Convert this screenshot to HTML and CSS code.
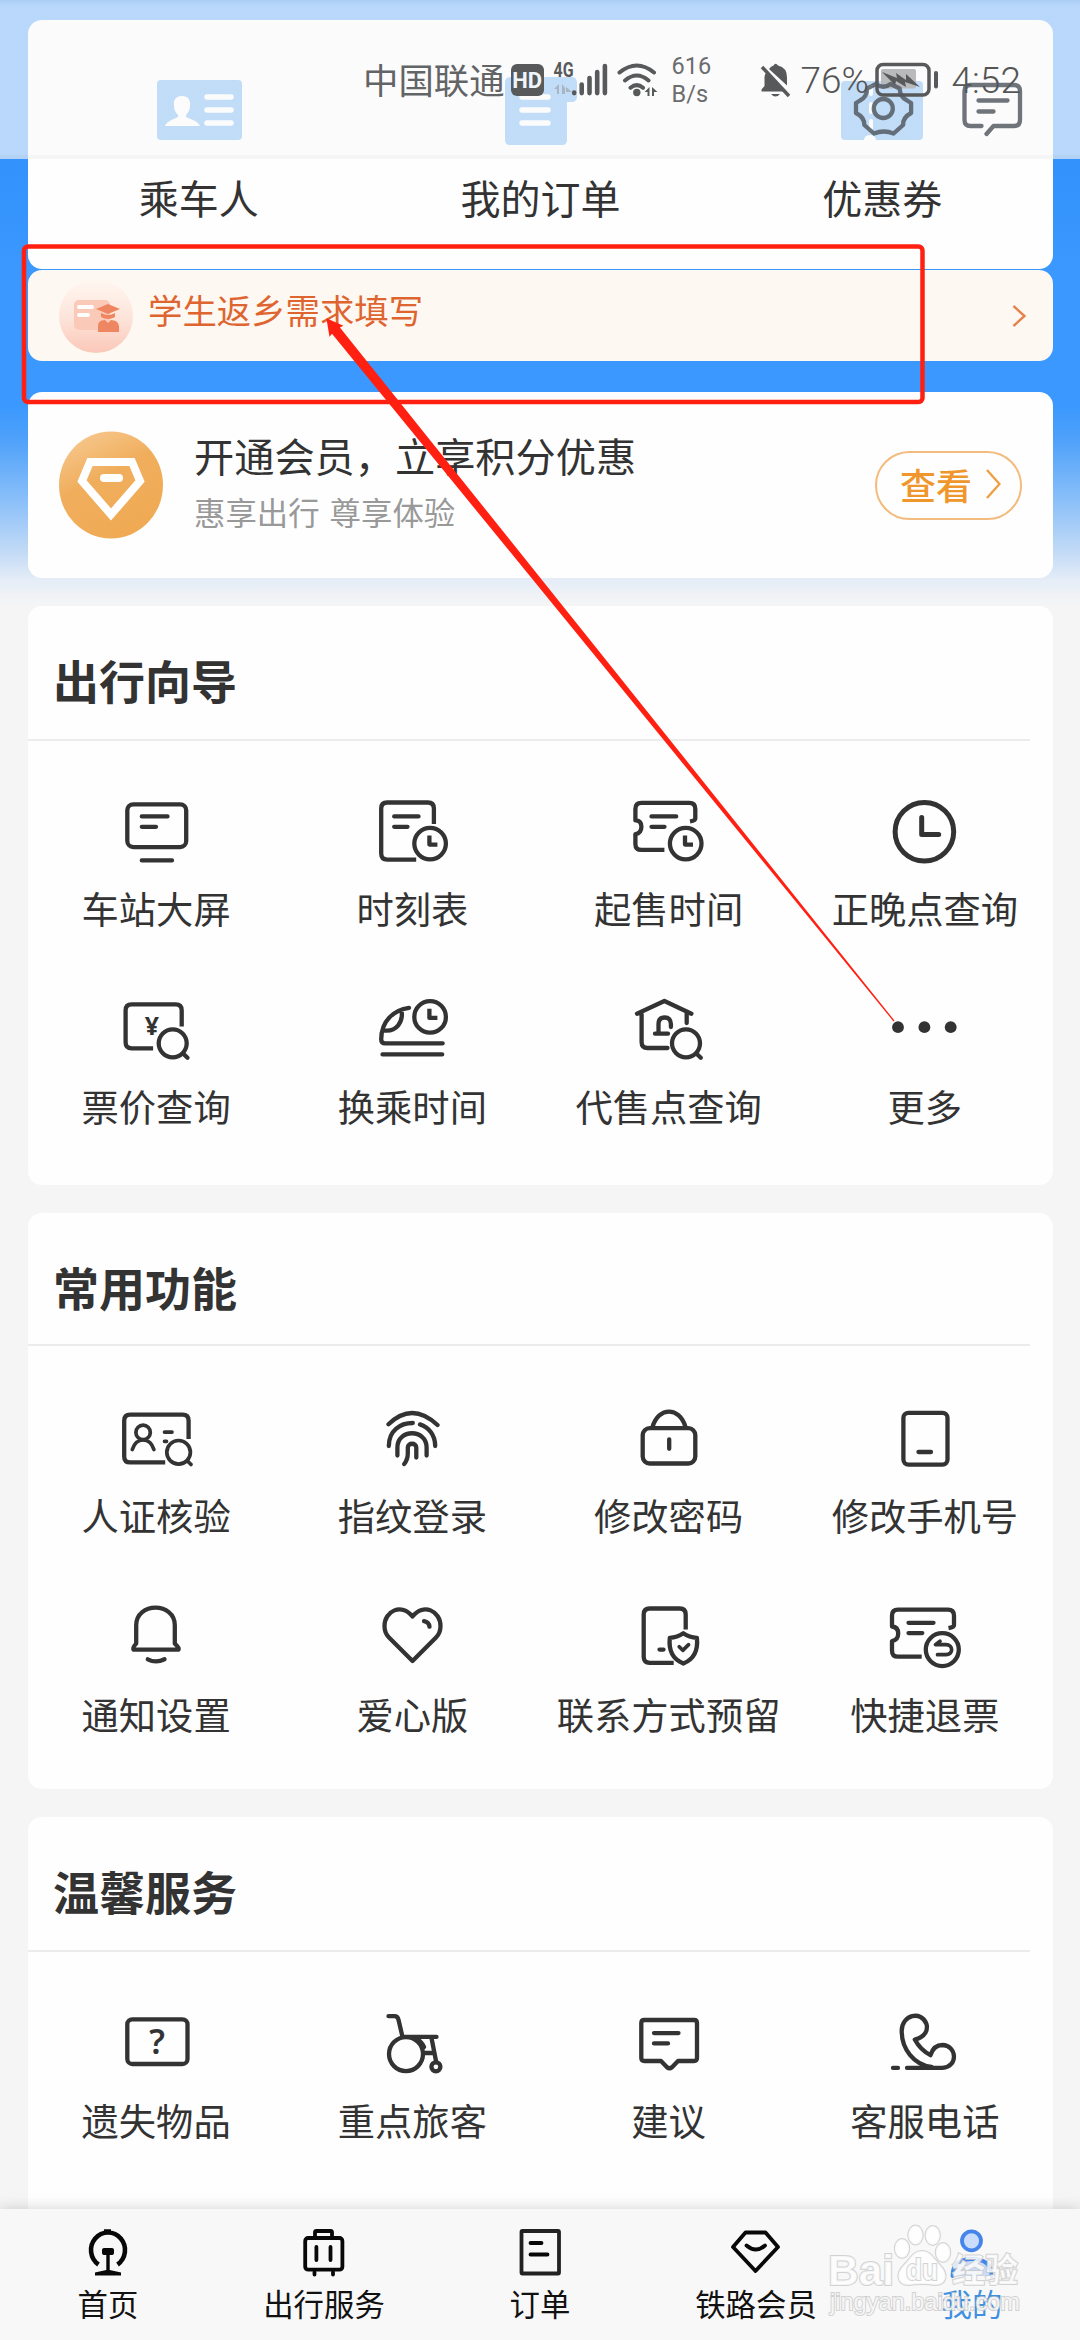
FILE: index.html
```html
<!DOCTYPE html>
<html lang="zh-CN">
<head>
<meta charset="utf-8">
<title>我的</title>
<link rel="stylesheet" href="styles.css">
</head>
<body>
<div class="screen">
  <main class="content">
    <section class="card quick">
      <div class="quick-item">
        <svg class="quick-icon" viewBox="-50 -40 100 80">
          <rect class="blue" x="-42" y="-30" width="85" height="60" rx="4"/>
          <path class="white" d="M-17-14c6 0 9 4 8 10c0 4-2 7-4 9v2c6 3 12 4 14 9h-35c2-5 7-6 13-9v-2c-2-2-4-5-4-9c-1-6 2-10 8-10z"/>
          <path class="white-line" d="M8-13h24M8 0h24M8 13h24"/>
        </svg>
        <span>乘车人</span>
      </div>
      <div class="quick-item">
        <svg class="quick-icon" viewBox="-50 -40 100 80">
          <path class="blue" d="M-28-33h60q5 0 5 6v14q0 4-4 5h-6v38q0 5-5 5h-52q-5 0-5-5v-58q0-5 7-5z"/>
          <path class="white-line" d="M-18-13h26M-18 0h26M-18 13h26"/>
        </svg>
        <span>我的订单</span>
      </div>
      <div class="quick-item">
        <svg class="quick-icon" viewBox="-50 -40 100 80">
          <rect class="blue" x="-41" y="-29" width="82" height="59" rx="4"/>
          <path class="white-line thin" d="M-11-24v8M-11-6v8M-11 11v8"/><path class="white" d="M-18 30a6 5 0 0 1 12 0z"/>
        </svg>
        <span>优惠券</span>
      </div>
    </section>

    <section class="card notice">
      <svg class="notice-icon" viewBox="0 0 76 76">
        <defs><linearGradient id="peach" x1="0" y1="0" x2="0" y2="1"><stop offset="0" stop-color="#fff7f1"/><stop offset=".5" stop-color="#fde5db"/><stop offset="1" stop-color="#fac8b8"/></linearGradient>
        <linearGradient id="gold" x1="0" y1="0" x2=".5" y2="1"><stop offset="0" stop-color="#f8cd98"/><stop offset=".5" stop-color="#f0ae5d"/><stop offset="1" stop-color="#f0aa54"/></linearGradient></defs>
        <circle cx="38" cy="38" r="37" fill="url(#peach)"/>
        <rect x="16" y="22" width="36" height="30" rx="5" fill="#fbc9b8"/>
        <path d="M21 29h13M21 37h9" stroke="#fff" stroke-width="4" stroke-linecap="round"/>
        <path d="M50 26l12 5-12 5-12-5zM43 35q7 4 14 0v4q-7 4-14 0z" fill="#ee8761"/>
        <path d="M40 54v-6q0-6 7-6l3 3 3-3q7 0 8 6v6z" fill="#ee8761"/>
      </svg>
      <span class="notice-text">学生返乡需求填写</span>
      <svg class="notice-arrow" viewBox="0 0 14 24"><path d="M1.5 2l11 10-11 10"/></svg>
    </section>

    <section class="card member">
      <svg class="member-icon" viewBox="0 0 106 108">
        <ellipse cx="53" cy="54" rx="52" ry="53.5" fill="url(#gold)"/>
        <path d="M32 31h42l8 19-29 33.500-29-33.500z" fill="none" stroke="#fff" stroke-width="8"/>
        <path d="M46 47h15" stroke="#fff" stroke-width="8" stroke-linecap="round"/>
      </svg>
      <div class="member-copy">
        <div class="member-title">开通会员，立享积分优惠</div>
        <div class="member-sub">惠享出行 尊享体验</div>
      </div>
      <div class="member-button">查看<svg viewBox="0 0 15 30"><path d="M1 1l12.500 14-12.500 14"/></svg></div>
    </section>

    <section class="card group guide">
      <h2>出行向导</h2>
      <div class="grid">
        <div class="tile"><svg viewBox="-50 -40 100 80"><rect x="-28.700" y="-27.700" width="58.900" height="42.800" rx="6"/><path d="M-14.200-15.600h25.700M-14.200-5.200h14.200M-14.200 28.400h30.200"/></svg><span>车站大屏</span></div>
        <div class="tile"><svg viewBox="-50 -40 100 80"><path class="butt" d="M21.900-8v-15.500q0-6-6-6h-40.700q-6 0-6 6v45.100q0 6 6 6h29"/><path d="M-17.800-15.600h24.300M-17.800-5.200h13.300"/><circle cx="18.100" cy="11.600" r="15.800"/><path class="butt" d="M17.400 3.500v9.100h8"/></svg><span>时刻表</span></div>
        <div class="tile"><svg viewBox="-50 -40 100 80"><path class="butt" d="M21-10.500q5.300-1 5.300-3v-9.600q0-6-6-6h-47.900q-6 0-6 6v11.500q6 0 6 6.400t-6 7.400v9.700q0 6 6 6h23"/><path d="M-17.500-15.600h24.700M-17.500-5.200h13"/><circle cx="16.700" cy="11.600" r="15.800"/><path class="butt" d="M16 3.500v9.100h8"/></svg><span>起售时间</span></div>
        <div class="tile"><svg viewBox="-50 -40 100 80"><circle class="bold" cx="-.6" cy="-.2" r="29.300"/><path class="bold" d="M-3.300-14.500v17.100h17"/></svg><span>正晚点查询</span></div>
        <div class="tile"><svg viewBox="-50 -40 100 80"><path class="butt" d="M25.700-3.500v-16.100q0-6-6-6h-44.100q-6 0-6 6v31.900q0 6 6 6h21.500"/><text class="yen" x="-4" y="4.800">¥</text><circle cx="16.700" cy="13.300" r="14"/><path d="M27 23.500l4.500 4.300"/></svg><span>票价查询</span></div>
        <div class="tile"><svg viewBox="-50 -40 100 80"><path d="M-3-22.200c-15 2-27.800 13-27.800 31.600q0 3.900 4 3.900h57.500M-29.500 24.400h59.700M-10.500-20c2 12-5 22-17.500 20.500"/><circle cx="18.100" cy="-13.100" r="15.800"/><path class="butt" d="M17.400-21.200v9.100h8"/></svg><span>换乘时间</span></div>
        <div class="tile"><svg viewBox="-50 -40 100 80"><path d="M-32-16.300l27.400-12.700 27 12.700M-27.400-17.500v29.500q0 6 6 6h19.900M17.700-18v11"/><path d="M-14 3.700h13M-10.500 3v-9q0-6.500 6.200-6.500t6.200 6.500v3"/><circle cx="17" cy="13.300" r="14"/><path d="M27.300 23.500l4.500 4.300"/></svg><span>代售点查询</span></div>
        <div class="tile"><svg viewBox="-50 -40 100 80"><g class="solid"><circle cx="-27" cy="-2.800" r="5.900"/><circle cx="-.6" cy="-2.800" r="5.900"/><circle cx="25.700" cy="-2.800" r="5.900"/></g></svg><span>更多</span></div>
      </div>
    </section>

    <section class="card group common">
      <h2>常用功能</h2>
      <div class="grid">
        <div class="tile"><svg viewBox="-50 -40 100 80"><path class="butt" d="M32.600 0v-18.400q0-6-6-6h-52.400q-6 0-6 6v35.800q0 6 6 6h35"/><g class="fine"><circle cx="-12.900" cy="-6.600" r="7.200"/><path d="M-23.700 10.500q3-9.500 10.800-9.500t10.800 9.500M8.500-6.900h7.500M8.500 2.300h2"/><circle cx="22.600" cy="13.300" r="11.800"/><path d="M31.500 22l3.500 3.500"/></g></svg><span>人证核验</span></div>
        <div class="tile"><svg viewBox="-50 -40 100 80"><path d="M-23.500-14.700q23.500-23 49 .7M-23.200 7c0-15 11-23 24-23M8-14.600c9 3 15.200 11 15.200 21.600M-14.600 16.500v-8c0-19 29.200-19 29.200 0v8M4.300 18.500v-10c0-5-8.500-5-8.500 0v6q0 6-3.600 10.500"/></svg><span>指纹登录</span></div>
        <div class="tile"><svg viewBox="-50 -40 100 80"><rect x="-26.300" y="-10.900" width="52.600" height="35.400" rx="7"/><path d="M-16.500-12c6-20.500 27-20.500 33 0M.2.300v9.500"/></svg><span>修改密码</span></div>
        <div class="tile"><svg viewBox="-50 -40 100 80"><rect x="-21.600" y="-26.200" width="44.100" height="51.800" rx="5"/><path d="M-6.500 13h12.500"/></svg><span>修改手机号</span></div>
        <div class="tile"><svg viewBox="-50 -40 100 80"><path d="M-22.500 11.600h45q1-2-3.700-6v-18.300c0-23.500-38.600-23.500-38.600 0v18.300q-3.700 4-2.700 6zM-8.200 21.300q8 4.200 16.700 0"/></svg><span>通知设置</span></div>
        <div class="tile"><svg viewBox="-50 -40 100 80"><path d="M.5-21.500c-11-14-28-5.500-28 9.500q0 7 4.500 11.500l23.500 23.500 23.500-23.500q4.500-4.500 4.500-11.500c0-15-17-23.500-28-9.500zM12-16.800q5 1 5.500 5.500"/></svg><span>爱心版</span></div>
        <div class="tile"><svg viewBox="-50 -40 100 80"><path class="butt" d="M16.700-8.500v-15q0-6-6-6h-30q-6 0-6 6v42.300q0 6 6 6h24"/><path d="M-9.500 11.600h4M14.300-4.800q6 4 13.600 4.600c1.500 14-3.500 21.700-13.600 25.700c-10-4-15-11.700-13.500-25.700q7.500-.6 13.500-4.600z"/><path class="fine" d="M10.200 8.700l3.600 3.600 5.800-5.600"/></svg><span>联系方式预留</span></div>
        <div class="tile"><svg viewBox="-50 -40 100 80"><path class="butt" d="M23.500-9.800q5.500-1 5.500-3v-9.600q0-6-6-6h-50q-6 0-6 6v10.900q6.200.5 6.200 7t-6.200 7.500v9.700q0 6 6 6h23.700"/><path d="M-16.500-15.200h25M-16.500-4.900h13.800"/><circle cx="17.300" cy="11.600" r="16.500"/><path class="fine" d="M15 3.200l-4.500 3.500h10.500c7.500 0 7.500 10 0 10h-8.500"/></svg><span>快捷退票</span></div>
      </div>
    </section>

    <section class="card group care">
      <h2>温馨服务</h2>
      <div class="grid">
        <div class="tile"><svg viewBox="-50 -40 100 80"><rect x="-28.700" y="-24.700" width="60.200" height="44.700" rx="5"/><text class="question" x="1" y="9.500">?</text></svg><span>遗失物品</span></div>
        <div class="tile"><svg viewBox="-50 -40 100 80"><path d="M-23.500-27.800h6q3.200 0 4 3.500l4 17.200h34M19.500-6l4.500 23M13.300 9h8M5-5q5 3 7 8"/><circle cx="-6" cy="10.100" r="17"/><circle cx="23.900" cy="22.800" r="4.500"/></svg><span>重点旅客</span></div>
        <div class="tile"><svg viewBox="-50 -40 100 80"><path d="M-24.700-24h49.700q3 0 3 3v35q0 3-3 3h-16l-6 6.200q-2.500 2-5 0l-6-6.200h-16.700q-3 0-3-3v-35q0-3 3-3zM-15-10.900h24.500M-15-.6h14"/></svg><span>建议</span></div>
        <div class="tile"><svg viewBox="-50 -40 100 80"><path d="M-18 23.900h35.500c16-1 14.500-22.500 0-22.900q-9 0-12 10.200q-10-5-15.700-15.600c11-3 13.200-10 11.700-15.500c-5-14-24.800-9.500-24.800 6.900c0 18 12 33.500 29.800 36M-32 23.900h5"/></svg><span>客服电话</span></div>
      </div>
    </section>
  </main>

  <nav class="tabbar">
    <div class="tab"><svg viewBox="-30 -28 60 56"><path class="heavy" d="M-9.500 12.500a17 17.500 0 1 1 19 0M-4-20.500h7"/><path class="ink" d="M-4-4h8q2 0 2 2v3q0 2-3 2h-1.300v15l11.300 2.500v3h-26v-3l11.300-2.500v-15h-1.300q-3 0-3-2v-3q0-2 2-2z"/></svg><span>首页</span></div>
    <div class="tab"><svg viewBox="-30 -28 60 56"><rect x="-18.800" y="-14" width="37.200" height="31.700" rx="3"/><path d="M-9-15v-4.500q0-1.500 1.500-1.500h14q1.500 0 1.500 1.500v4.500M-7.600-5v13M6.500-5v13M-9.500 20v2.500M9 20v2.500"/></svg><span>出行服务</span></div>
    <div class="tab"><svg viewBox="-30 -28 60 56"><rect class="grey" x="-18.500" y="-21" width="37.500" height="42.500" rx="1"/><path d="M-9.500-9h11M-9.500 2.500h17"/></svg><span>订单</span></div>
    <div class="tab"><svg viewBox="-30 -28 60 56"><path d="M-10.500-19.500h20l12.500 14.500-22.500 24-22.500-24zM-9.500-6.500q9.500 8 18.500 0"/></svg><span>铁路会员</span></div>
    <div class="tab active"><svg viewBox="-30 -28 60 56"><circle cx="-.5" cy="-11.200" r="9.500"/><path d="M-19.500 24q0-17 19.500-17t19.500 17"/></svg><span>我的</span></div>
  </nav>

  <div class="frost"></div>
  <div class="statusbar">
    <span class="carrier">中国联通</span>
    <span class="hd">HD</span>
    <svg class="signal" viewBox="550 55 112 46">
      <text class="net" x="553.500" y="76.300" textLength="20" lengthAdjust="spacingAndGlyphs">4G</text>
      <path class="pale" d="M559 83v10h-2v-5h-3zM562 93v-10l3 4v6zM566 86l6 5h-6z"/>
      <path class="bars" d="M574.200 91.500v.6M581.700 83.500v8.600M589.500 77v15.100M597.200 71v21.100M604.900 65v27.100"/>
      <path class="waves" d="M619.500 71.500q17.300-14 34.500 0M625 79.500q11.800-10 23.500 0M630.500 86.800q6.300-5.500 12.500 0"/>
      <circle cx="636.800" cy="91.500" r="3.700"/><path d="M649.500 86v9h-2v-4h-3zM652 86l5.500 5h-3.500v4h-2z"/>
    </svg>
    <span class="speed">616<br>B/s</span>
    <svg class="mute" viewBox="758 61 34 38"><path d="M768 69q2-3 4.500-3.500q2-3.500 4.500 0q9 2 9 12v8zM765.500 72.500l18.500 19h-23.500v-2l3-3.500v-9q0-3 2-4.500zM770 94h9q-4.500 5-9 0z"/><path class="slash" d="M761 67l27 29"/></svg>
    <span class="percent">76%</span>
    <svg class="battery" viewBox="873 61 66 38"><rect class="shell" x="876" y="64.500" width="52" height="30.500" rx="6"/><rect class="charge" x="880" y="69" width="35" height="19.500" rx="2"/><path d="M881 72l15 6-1-5 10 7v-6l14 13-15-5 1 5-10-6-1 4z"/><rect x="933" y="71" width="4" height="17.500" rx="2"/></svg>
    <span class="clock">4:52</span>
  </div>
  <svg class="header-icons" viewBox="850 76 180 66">
    <path d="M876 84q7.300 5.500 14.600 0l9 4.500q.5 8.500 7.500 12l4 2.500v10q-8.500 4.500-8 12l-9.500 8.500q-9.800-4-19.600 0l-9.700-8.500q.5-7.500-8.300-12v-10l4-2.500q7-3.500 7-12z"/><circle cx="883.300" cy="108.500" r="9.500"/>
    <path d="M981.500 126h-11q-6 0-6-6v-29q0-6 6-6h43.500q6 0 6 6v29q0 6-6 6h-20.500l-7 8M978.500 100.500h29M978.500 111.500h15"/>
  </svg>

  <svg class="watermark" viewBox="820 2220 210 110">
    <g class="paw"><ellipse cx="902" cy="2248.500" rx="7.200" ry="9.500"/><ellipse cx="915.500" cy="2235" rx="7.200" ry="9.500"/><ellipse cx="932.700" cy="2235.500" rx="7.200" ry="9.500"/><ellipse cx="943" cy="2252.500" rx="7.200" ry="9.500"/><path d="M922 2251c9 0 12 8 18 14c9 9 7 20-5 20q-13-2-26 0c-12 0-14-11-5-20c6-6 9-14 18-14z"/></g>
    <text class="brand" x="828" y="2285" textLength="66" lengthAdjust="spacingAndGlyphs">Bai</text>
    <text class="du" x="906" y="2280" textLength="32" lengthAdjust="spacingAndGlyphs">du</text>
    <text class="jy" x="952" y="2282">经验</text>
    <text class="url" x="830" y="2310" textLength="190" lengthAdjust="spacingAndGlyphs">jingyan.baidu.com</text>
  </svg>

  <svg class="annotation" viewBox="0 0 1080 2340">
    <rect x="24" y="246.500" width="898.500" height="155.500" rx="4"/>
    <path d="M326.400 318.300l17 7.400-3.500 1.700L894.500 1020.600l-1 .8L332 333.800l-2.500 3z"/>
  </svg>
</div>
</body>
</html>
```
FILE: styles.css
```css
* { box-sizing: border-box; }

body {
  margin: 0;
  font-family: "Noto Sans CJK SC", "Noto Sans", sans-serif;
  color: #333;
}

.screen {
  position: relative;
  display: flex;
  flex-direction: column;
  width: 1080px;
  height: 2340px;
  overflow: hidden;
  background: linear-gradient(#3392fc 0, #3392fc 170px, #3a98fe 270px, #3a98fe 405px, #4fa1fa 440px, #8abff9 500px, #c6dcf6 555px, #e5edf7 580px, #f5f5f5 605px);
}

.content {
  flex: 1;
  min-height: 0;
  padding: 20px 27px 0 28px;
  overflow: hidden;
}

.card {
  background: #fefefe;
  border-radius: 14px;
}

.quick {
  display: grid;
  grid-template-columns: repeat(3, 1fr);
  height: 249px;
  padding-top: 50px;
}

.quick-item {
  display: flex;
  flex-direction: column;
  align-items: center;
  gap: 18px;
  font-size: 40px;
  line-height: 58px;
}

.quick-icon { width: 100px; height: 80px; }
.blue { fill: #4ba0f3; }
.white { fill: #fff; }
.white-line { fill: none; stroke: #fff; stroke-width: 5.5; stroke-linecap: round; }
.white-line.thin { stroke-width: 4; }

.notice {
  display: flex;
  align-items: center;
  height: 91px;
  margin-top: 1px;
  padding: 0 27px 0 30px;
  background: #fef8f2;
}

.notice-icon { width: 76px; height: 76px; }
.notice-text {
  margin-left: 14px;
  padding-bottom: 13px;
  color: #df6530;
  font-size: 34.4px;
  line-height: 50px;
}
.notice-arrow {
  width: 14px;
  height: 24px;
  margin-left: auto;
  fill: none;
  stroke: #e5824f;
  stroke-width: 2.4;
}

.member {
  display: flex;
  align-items: center;
  height: 186px;
  margin-top: 31px;
  padding: 0 31px 0 30px;
}
.member-icon { width: 106px; height: 108px; }
.member-copy { margin-left: 30px; padding-bottom: 5px; }
.member-title { font-size: 40.2px; line-height: 58px; }
.member-sub { color: #999; font-size: 31.4px; line-height: 55px; word-spacing: 3px; }
.member-button {
  display: flex;
  align-items: center;
  justify-content: center;
  gap: 14px;
  width: 147px;
  height: 69px;
  margin-left: auto;
  padding: 0 0 2px 4px;
  border: 2px solid #f3bb7e;
  border-radius: 35px;
  color: #ef962c;
  font-size: 36px;
  font-weight: 500;
  line-height: 50px;
}
.member-button svg { width: 15px; height: 30px; fill: none; stroke: #ef9f42; stroke-width: 2.4; }

.group h2 {
  height: 133px;
  margin: 0;
  padding: 44px 0 0 25px;
  font-size: 46px;
  font-weight: 700;
  line-height: 58px;
}
.guide { height: 579px; margin-top: 28px; }
.common { height: 576px; margin-top: 28px; }
.care { height: 500px; margin-top: 28px; }

.grid {
  display: grid;
  grid-template-columns: repeat(4, 1fr);
  row-gap: 54px;
  padding-top: 53px;
  background: linear-gradient(#ececec, #ececec) 0 0 / 1002px 2px no-repeat;
}

.common h2 { height: 131px; }
.common .grid { row-gap: 55px; padding-top: 54.500px; }
.care .grid { padding-top: 53.500px; }

.tile {
  display: flex;
  flex-direction: column;
  align-items: center;
  gap: 8px;
  font-size: 37.300px;
  line-height: 56px;
  white-space: nowrap;
}
.tile svg {
  width: 100px;
  height: 80px;
  fill: none;
  stroke: #333;
  stroke-width: 4.3;
  stroke-linecap: round;
  stroke-linejoin: round;
}
.tile .butt { stroke-linecap: butt; }
.tile .bold { stroke-width: 5; }
.tile .fine { stroke-width: 3.7; }
.tile .solid { fill: #333; stroke: none; }
.tile text {
  fill: #333;
  stroke: none;
  font-family: "Noto Sans", sans-serif;
  text-anchor: middle;
}
.yen { font-size: 25px; font-weight: 700; }
.question { font-size: 34px; font-weight: 600; }

.tabbar {
  position: relative;
  display: grid;
  grid-template-columns: repeat(5, 1fr);
  height: 131px;
  padding-top: 15px;
  background: #f8f8f8;
  box-shadow: 0 0 14px rgba(0, 0, 0, .18);
}
.tab {
  display: flex;
  flex-direction: column;
  align-items: center;
  gap: 1px;
  color: #111;
  font-size: 30.4px;
  line-height: 44px;
}
.tab svg {
  width: 60px;
  height: 56px;
  fill: none;
  stroke: #080808;
  stroke-width: 3.8;
  stroke-linecap: round;
  stroke-linejoin: round;
}
.tab .heavy { stroke-width: 4.600; stroke-linecap: butt; }
.tab .ink { fill: #080808; stroke: none; }
.tab .grey { stroke: #222; }
.tab.active { color: #4090df; }
.tab.active svg { fill: #c9dcfb; stroke: #4585ea; }

/* Translucent header over the scrolled page */
.frost {
  position: absolute;
  inset: 0 0 auto;
  height: 159px;
  background: linear-gradient(rgba(230, 235, 240, .67), rgba(250, 250, 250, .67) 6px, rgba(250, 250, 250, .67) 155px, rgba(240, 241, 242, .67) 155px);
}

.statusbar {
  position: absolute;
  top: 52px;
  left: 363px;
  display: flex;
  align-items: center;
  height: 56px;
  color: #636466;
  white-space: nowrap;
}
.statusbar svg { fill: #58595b; }
.carrier { padding-bottom: 4px; font-size: 35.4px; }
.hd {
  width: 33px;
  height: 32px;
  margin-left: 6px;
  border-radius: 6px;
  background: #57595b;
  color: #eef6fc;
  font: 700 22px/33px "Roboto", sans-serif;
  text-align: center;
}
.signal { width: 112px; height: 46px; margin-left: 6px; margin-top: -3px; }
.signal .net { font: 700 20px "Roboto", sans-serif; }
.signal .pale { fill: #a9b5c1; }
.bars, .waves { fill: none; stroke: #58595b; stroke-width: 4.600; stroke-linecap: round; }
.waves { stroke-width: 4; }
.speed {
  width: 40px;
  margin-left: 10px;
  font: 400 23.500px/28px "Roboto", sans-serif;
  color: #6b6c6e;
}
.mute { width: 34px; height: 38px; margin-left: 47px; }
.slash { stroke: #58595b; stroke-width: 3.5; }
.percent, .clock { padding-top: 2px; font: 300 37px/56px "Roboto", sans-serif; color: #555; }
.percent { width: 72px; margin-left: 8px; margin-right: 1px; }
.battery { width: 66px; height: 38px; flex: none; }
.battery .shell { fill: none; stroke: #58595b; stroke-width: 3.5; }
.battery .charge { fill: #b9babc; }
.clock { margin-left: 12px; }

.header-icons {
  position: absolute;
  top: 76px;
  left: 850px;
  width: 180px;
  height: 66px;
  fill: none;
  stroke: #50585f;
  stroke-opacity: .83;
  stroke-width: 4.3;
  stroke-linecap: round;
  stroke-linejoin: round;
}

.watermark {
  position: absolute;
  top: 2220px;
  left: 820px;
  width: 210px;
  height: 110px;
  fill: #fff;
  fill-opacity: .78;
  stroke: #c8c8c8;
  stroke-opacity: .8;
  stroke-width: 2;
  paint-order: stroke;
}
.brand { font: 700 43px "Liberation Sans", sans-serif; }
.du { font: 700 29px "Liberation Sans", sans-serif; }
.jy { font: 700 33px "Noto Sans CJK SC", sans-serif; }
.url { font: 400 24px "Liberation Sans", sans-serif; }

.annotation {
  position: absolute;
  inset: 0;
  width: 1080px;
  height: 2340px;
  fill: #ff2012;
}
.annotation rect { fill: none; stroke: #ff2012; stroke-width: 4.500; }
```
